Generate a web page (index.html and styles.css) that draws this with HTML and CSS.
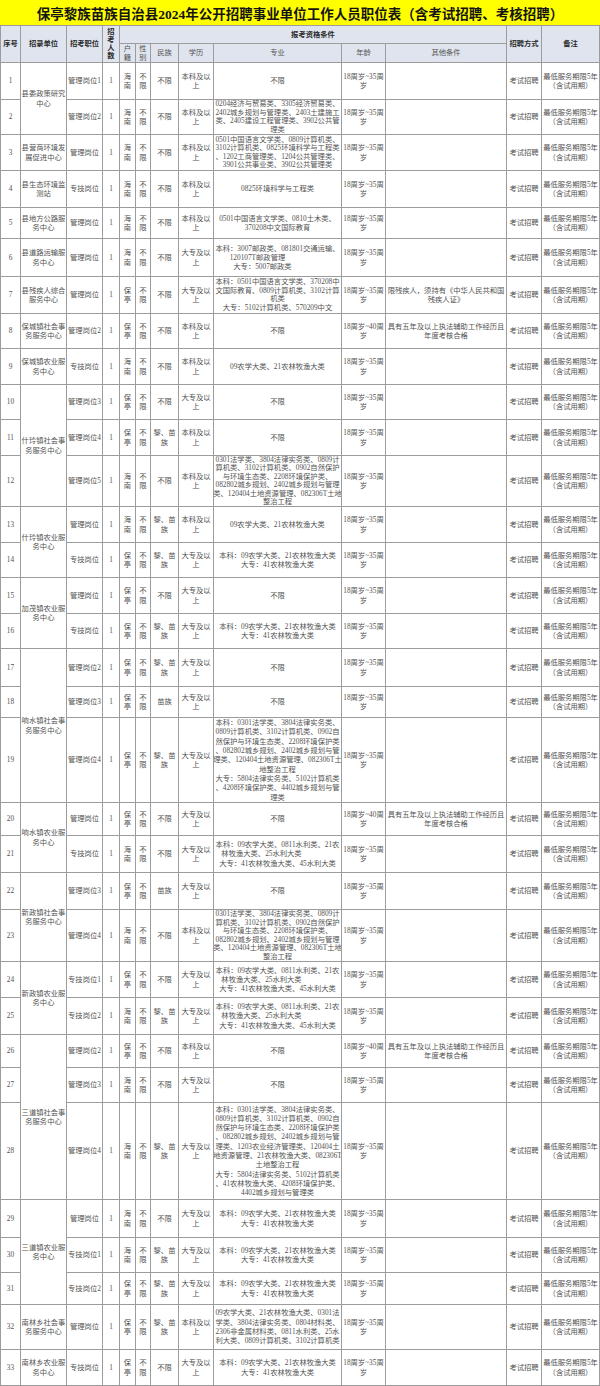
FILE: index.html
```html
<!DOCTYPE html>
<html lang="zh-CN">
<head>
<meta charset="utf-8">
<title>保亭黎族苗族自治县2024年公开招聘事业单位工作人员职位表</title>
<link rel="stylesheet" href="styles.css">
</head>
<body>
<div class="title">保亭黎族苗族自治县2024年公开招聘事业单位工作人员职位表（含考试招聘、考核招聘）</div>
<div class="sheet">
  <div class="c h r2">序号</div>
  <div class="c h r2">招录单位</div>
  <div class="c h r2">招考职位</div>
  <div class="c h r2 tall">招<br>考<br>人<br>数</div>
  <div class="c h c7">报考资格条件</div>
  <div class="c h r2">招聘方式</div>
  <div class="c h r2">备注</div>
  <div class="c hs">户<br>籍</div>
  <div class="c hs">性<br>别</div>
  <div class="c hs">民族</div>
  <div class="c hs">学历</div>
  <div class="c hs">专业</div>
  <div class="c hs">年龄</div>
  <div class="c hs">其他条件</div>

  <!-- 1 -->
  <div class="c">1</div><div class="c r2">县委政策研究<br>中心</div><div class="c">管理岗位1</div><div class="c">1</div><div class="c">海<br>南</div><div class="c">不<br>限</div><div class="c">不限</div><div class="c">本科及以<br>上</div><div class="c">不限</div><div class="c">18周岁~35周<br>岁</div><div class="c"></div><div class="c">考试招聘</div><div class="c">最低服务期限5年<br>（含试用期）</div>
  <!-- 2 -->
  <div class="c">2</div><div class="c">管理岗位2</div><div class="c">1</div><div class="c">海<br>南</div><div class="c">不<br>限</div><div class="c">不限</div><div class="c">本科及以<br>上</div><div class="c dense">0204经济与贸易类、3305经济贸易类、<br>2402城乡规划与管理类、2403土建施工<br>类、2405建设工程管理类、3902公共管<br>理类</div><div class="c">18周岁~35周<br>岁</div><div class="c"></div><div class="c">考试招聘</div><div class="c">最低服务期限5年<br>（含试用期）</div>
  <!-- 3 -->
  <div class="c">3</div><div class="c">县营商环境发<br>展促进中心</div><div class="c">管理岗位</div><div class="c">1</div><div class="c">海<br>南</div><div class="c">不<br>限</div><div class="c">不限</div><div class="c">本科及以<br>上</div><div class="c dense">0501中国语言文学类、0809计算机类、<br>3102计算机类、0825环境科学与工程类<br>、1202工商管理类、1204公共管理类、<br>3901公共事业类、3902公共管理类</div><div class="c">18周岁~35周<br>岁</div><div class="c"></div><div class="c">考试招聘</div><div class="c">最低服务期限5年<br>（含试用期）</div>
  <!-- 4 -->
  <div class="c">4</div><div class="c">县生态环境监<br>测站</div><div class="c">专技岗位</div><div class="c">1</div><div class="c">海<br>南</div><div class="c">不<br>限</div><div class="c">不限</div><div class="c">本科及以<br>上</div><div class="c">0825环境科学与工程类</div><div class="c">18周岁~35周<br>岁</div><div class="c"></div><div class="c">考试招聘</div><div class="c">最低服务期限5年<br>（含试用期）</div>
  <!-- 5 -->
  <div class="c">5</div><div class="c">县地方公路服<br>务中心</div><div class="c">管理岗位</div><div class="c">1</div><div class="c">海<br>南</div><div class="c">不<br>限</div><div class="c">不限</div><div class="c">本科及以<br>上</div><div class="c">0501中国语言文学类、0810土木类、<br>370208中文国际教育</div><div class="c">18周岁~35周<br>岁</div><div class="c"></div><div class="c">考试招聘</div><div class="c">最低服务期限5年<br>（含试用期）</div>
  <!-- 6 -->
  <div class="c">6</div><div class="c">县道路运输服<br>务中心</div><div class="c">管理岗位</div><div class="c">1</div><div class="c">海<br>南</div><div class="c">不<br>限</div><div class="c">不限</div><div class="c">大专及以<br>上</div><div class="c"><div>本科：3007邮政类、081801交通运输、<br><span class="pa">120107T邮政管理</span><br><span class="pb">大专：5007邮政类</span></div></div><div class="c">18周岁~35周<br>岁</div><div class="c"></div><div class="c">考试招聘</div><div class="c">最低服务期限5年<br>（含试用期）</div>
  <!-- 7 -->
  <div class="c">7</div><div class="c">县残疾人综合<br>服务中心</div><div class="c">管理岗位</div><div class="c">1</div><div class="c">保<br>亭</div><div class="c">不<br>限</div><div class="c">不限</div><div class="c">大专及以<br>上</div><div class="c dense">本科：0501中国语言文学类、370208中<br>文国际教育、0809计算机类、3102计算<br>机类<br>大专：5102计算机类、570209中文</div><div class="c">18周岁~35周<br>岁</div><div class="c">限残疾人，须持有《中华人民共和国<br>残疾人证》</div><div class="c">考试招聘</div><div class="c">最低服务期限5年<br>（含试用期）</div>
  <!-- 8 -->
  <div class="c">8</div><div class="c">保城镇社会事<br>务服务中心</div><div class="c">管理岗位2</div><div class="c">1</div><div class="c">保<br>亭</div><div class="c">不<br>限</div><div class="c">不限</div><div class="c">本科及以<br>上</div><div class="c">不限</div><div class="c">18周岁~40周<br>岁</div><div class="c">具有五年及以上执法辅助工作经历且<br>年度考核合格</div><div class="c">考试招聘</div><div class="c">最低服务期限5年<br>（含试用期）</div>
  <!-- 9 -->
  <div class="c">9</div><div class="c">保城镇农业服<br>务中心</div><div class="c">专技岗位</div><div class="c">1</div><div class="c">海<br>南</div><div class="c">不<br>限</div><div class="c">不限</div><div class="c">本科及以<br>上</div><div class="c">09农学大类、21农林牧渔大类</div><div class="c">18周岁~35周<br>岁</div><div class="c"></div><div class="c">考试招聘</div><div class="c">最低服务期限5年<br>（含试用期）</div>
  <!-- 10 -->
  <div class="c">10</div><div class="c r3">什玲镇社会事<br>务服务中心</div><div class="c">管理岗位3</div><div class="c">1</div><div class="c">保<br>亭</div><div class="c">不<br>限</div><div class="c">不限</div><div class="c">大专及以<br>上</div><div class="c">不限</div><div class="c">18周岁~35周<br>岁</div><div class="c"></div><div class="c">考试招聘</div><div class="c">最低服务期限5年<br>（含试用期）</div>
  <!-- 11 -->
  <div class="c">11</div><div class="c">管理岗位4</div><div class="c">1</div><div class="c">保<br>亭</div><div class="c">不<br>限</div><div class="c">黎、苗<br>族</div><div class="c">本科及以<br>上</div><div class="c">不限</div><div class="c">18周岁~35周<br>岁</div><div class="c"></div><div class="c">考试招聘</div><div class="c">最低服务期限5年<br>（含试用期）</div>
  <!-- 12 -->
  <div class="c">12</div><div class="c">管理岗位5</div><div class="c">1</div><div class="c">海<br>南</div><div class="c">不<br>限</div><div class="c">不限</div><div class="c">本科及以<br>上</div><div class="c dense">0301法学类、3804法律实务类、0809计<br>算机类、3102计算机类、0902自然保护<br>与环境生态类、2208环境保护类、<br>082802城乡规划、2402城乡规划与管理<br>类、120404土地资源管理、082306T土地<br>整治工程</div><div class="c">18周岁~35周<br>岁</div><div class="c"></div><div class="c">考试招聘</div><div class="c">最低服务期限5年<br>（含试用期）</div>
  <!-- 13 -->
  <div class="c">13</div><div class="c r2">什玲镇农业服<br>务中心</div><div class="c">管理岗位</div><div class="c">1</div><div class="c">海<br>南</div><div class="c">不<br>限</div><div class="c">黎、苗<br>族</div><div class="c">本科及以<br>上</div><div class="c">09农学大类、21农林牧渔大类</div><div class="c">18周岁~35周<br>岁</div><div class="c"></div><div class="c">考试招聘</div><div class="c">最低服务期限5年<br>（含试用期）</div>
  <!-- 14 -->
  <div class="c">14</div><div class="c">专技岗位</div><div class="c">1</div><div class="c">保<br>亭</div><div class="c">不<br>限</div><div class="c">黎、苗<br>族</div><div class="c">大专及以<br>上</div><div class="c">本科：09农学大类、21农林牧渔大类<br>大专：41农林牧渔大类</div><div class="c">18周岁~35周<br>岁</div><div class="c"></div><div class="c">考试招聘</div><div class="c">最低服务期限5年<br>（含试用期）</div>
  <!-- 15 -->
  <div class="c">15</div><div class="c r2">加茂镇农业服<br>务中心</div><div class="c">管理岗位</div><div class="c">1</div><div class="c">保<br>亭</div><div class="c">不<br>限</div><div class="c">不限</div><div class="c">大专及以<br>上</div><div class="c">不限</div><div class="c">18周岁~35周<br>岁</div><div class="c"></div><div class="c">考试招聘</div><div class="c">最低服务期限5年<br>（含试用期）</div>
  <!-- 16 -->
  <div class="c">16</div><div class="c">专技岗位</div><div class="c">1</div><div class="c">保<br>亭</div><div class="c">不<br>限</div><div class="c">黎、苗<br>族</div><div class="c">大专及以<br>上</div><div class="c">本科：09农学大类、21农林牧渔大类<br>大专：41农林牧渔大类</div><div class="c">18周岁~35周<br>岁</div><div class="c"></div><div class="c">考试招聘</div><div class="c">最低服务期限5年<br>（含试用期）</div>
  <!-- 17 -->
  <div class="c">17</div><div class="c r3">响水镇社会事<br>务服务中心</div><div class="c">管理岗位2</div><div class="c">1</div><div class="c">保<br>亭</div><div class="c">不<br>限</div><div class="c">黎、苗<br>族</div><div class="c">大专及以<br>上</div><div class="c">不限</div><div class="c">18周岁~35周<br>岁</div><div class="c"></div><div class="c">考试招聘</div><div class="c">最低服务期限5年<br>（含试用期）</div>
  <!-- 18 -->
  <div class="c">18</div><div class="c">管理岗位3</div><div class="c">1</div><div class="c">保<br>亭</div><div class="c">不<br>限</div><div class="c">苗族</div><div class="c">大专及以<br>上</div><div class="c">不限</div><div class="c">18周岁~35周<br>岁</div><div class="c"></div><div class="c">考试招聘</div><div class="c">最低服务期限5年<br>（含试用期）</div>
  <!-- 19 -->
  <div class="c">19</div><div class="c">管理岗位4</div><div class="c">1</div><div class="c">保<br>亭</div><div class="c">不<br>限</div><div class="c">黎、苗<br>族</div><div class="c">大专及以<br>上</div><div class="c">本科：0301法学类、3804法律实务类、<br>0809计算机类、3102计算机类、0902自<br>然保护与环境生态类、2208环境保护类<br>、082802城乡规划、2402城乡规划与管<br>理类、120404土地资源管理、082306T土<br>地整治工程<br>大专：5804法律实务类、5102计算机类<br>、4208环境保护类、4402城乡规划与管<br>理类</div><div class="c">18周岁~35周<br>岁</div><div class="c"></div><div class="c">考试招聘</div><div class="c">最低服务期限5年<br>（含试用期）</div>
  <!-- 20 -->
  <div class="c">20</div><div class="c r2">响水镇农业服<br>务中心</div><div class="c">管理岗位</div><div class="c">1</div><div class="c">保<br>亭</div><div class="c">不<br>限</div><div class="c">不限</div><div class="c">大专及以<br>上</div><div class="c">不限</div><div class="c">18周岁~40周<br>岁</div><div class="c">具有五年及以上执法辅助工作经历且<br>年度考核合格</div><div class="c">考试招聘</div><div class="c">最低服务期限5年<br>（含试用期）</div>
  <!-- 21 -->
  <div class="c">21</div><div class="c">专技岗位</div><div class="c">1</div><div class="c">海<br>南</div><div class="c">不<br>限</div><div class="c">不限</div><div class="c">大专及以<br>上</div><div class="c"><div>本科：09农学大类、0811水利类、21农<br><span class="pc">林牧渔大类、25水利大类</span><br>大专：41农林牧渔大类、45水利大类</div></div><div class="c">18周岁~35周<br>岁</div><div class="c"></div><div class="c">考试招聘</div><div class="c">最低服务期限5年<br>（含试用期）</div>
  <!-- 22 -->
  <div class="c">22</div><div class="c r2">新政镇社会事<br>务服务中心</div><div class="c">管理岗位3</div><div class="c">1</div><div class="c">保<br>亭</div><div class="c">不<br>限</div><div class="c">苗族</div><div class="c">大专及以<br>上</div><div class="c">不限</div><div class="c">18周岁~35周<br>岁</div><div class="c"></div><div class="c">考试招聘</div><div class="c">最低服务期限5年<br>（含试用期）</div>
  <!-- 23 -->
  <div class="c">23</div><div class="c">管理岗位4</div><div class="c">1</div><div class="c">海<br>南</div><div class="c">不<br>限</div><div class="c">不限</div><div class="c">本科及以<br>上</div><div class="c dense">0301法学类、3804法律实务类、0809计<br>算机类、3102计算机类、0902自然保护<br>与环境生态类、2208环境保护类、<br>082802城乡规划、2402城乡规划与管理<br>类、120404土地资源管理、082306T土地<br>整治工程</div><div class="c">18周岁~35周<br>岁</div><div class="c"></div><div class="c">考试招聘</div><div class="c">最低服务期限5年<br>（含试用期）</div>
  <!-- 24 -->
  <div class="c">24</div><div class="c r2">新政镇农业服<br>务中心</div><div class="c">专技岗位1</div><div class="c">1</div><div class="c">保<br>亭</div><div class="c">不<br>限</div><div class="c">不限</div><div class="c">大专及以<br>上</div><div class="c"><div>本科：09农学大类、0811水利类、21农<br><span class="pc">林牧渔大类、25水利大类</span><br>大专：41农林牧渔大类、45水利大类</div></div><div class="c">18周岁~35周<br>岁</div><div class="c"></div><div class="c">考试招聘</div><div class="c">最低服务期限5年<br>（含试用期）</div>
  <!-- 25 -->
  <div class="c">25</div><div class="c">专技岗位2</div><div class="c">1</div><div class="c">海<br>南</div><div class="c">不<br>限</div><div class="c">黎、苗<br>族</div><div class="c">大专及以<br>上</div><div class="c"><div>本科：09农学大类、0811水利类、21农<br><span class="pc">林牧渔大类、25水利大类</span><br>大专：41农林牧渔大类、45水利大类</div></div><div class="c">18周岁~35周<br>岁</div><div class="c"></div><div class="c">考试招聘</div><div class="c">最低服务期限5年<br>（含试用期）</div>
  <!-- 26 -->
  <div class="c">26</div><div class="c r3">三道镇社会事<br>务服务中心</div><div class="c">管理岗位2</div><div class="c">1</div><div class="c">保<br>亭</div><div class="c">不<br>限</div><div class="c">不限</div><div class="c">本科及以<br>上</div><div class="c">不限</div><div class="c">18周岁~40周<br>岁</div><div class="c">具有五年及以上执法辅助工作经历且<br>年度考核合格</div><div class="c">考试招聘</div><div class="c">最低服务期限5年<br>（含试用期）</div>
  <!-- 27 -->
  <div class="c">27</div><div class="c">管理岗位3</div><div class="c">1</div><div class="c">海<br>南</div><div class="c">不<br>限</div><div class="c">不限</div><div class="c">大专及以<br>上</div><div class="c">不限</div><div class="c">18周岁~35周<br>岁</div><div class="c"></div><div class="c">考试招聘</div><div class="c">最低服务期限5年<br>（含试用期）</div>
  <!-- 28 -->
  <div class="c">28</div><div class="c">管理岗位4</div><div class="c">1</div><div class="c">海<br>南</div><div class="c">不<br>限</div><div class="c">黎、苗<br>族</div><div class="c">大专及以<br>上</div><div class="c">本科：0301法学类、3804法律实务类、<br>0809计算机类、3102计算机类、0902自<br>然保护与环境生态类、2208环境保护类<br>、082802城乡规划、2402城乡规划与管<br>理类、1203农业经济管理类、120404土<br>地资源管理、21农林牧渔大类、082306T<br>土地整治工程<br>大专：5804法律实务类、5102计算机类<br>、41农林牧渔大类、4208环境保护类、<br>4402城乡规划与管理类</div><div class="c">18周岁~35周<br>岁</div><div class="c"></div><div class="c">考试招聘</div><div class="c">最低服务期限5年<br>（含试用期）</div>
  <!-- 29 -->
  <div class="c">29</div><div class="c r3">三道镇农业服<br>务中心</div><div class="c">管理岗位</div><div class="c">1</div><div class="c">海<br>南</div><div class="c">不<br>限</div><div class="c">不限</div><div class="c">大专及以<br>上</div><div class="c">本科：09农学大类、21农林牧渔大类<br>大专：41农林牧渔大类</div><div class="c">18周岁~35周<br>岁</div><div class="c"></div><div class="c">考试招聘</div><div class="c">最低服务期限5年<br>（含试用期）</div>
  <!-- 30 -->
  <div class="c">30</div><div class="c">专技岗位1</div><div class="c">1</div><div class="c">海<br>南</div><div class="c">不<br>限</div><div class="c">黎、苗<br>族</div><div class="c">大专及以<br>上</div><div class="c">本科：09农学大类、21农林牧渔大类<br>大专：41农林牧渔大类</div><div class="c">18周岁~35周<br>岁</div><div class="c"></div><div class="c">考试招聘</div><div class="c">最低服务期限5年<br>（含试用期）</div>
  <!-- 31 -->
  <div class="c">31</div><div class="c">专技岗位2</div><div class="c">1</div><div class="c">保<br>亭</div><div class="c">不<br>限</div><div class="c">黎、苗<br>族</div><div class="c">大专及以<br>上</div><div class="c">本科：09农学大类、21农林牧渔大类<br>大专：41农林牧渔大类</div><div class="c">18周岁~35周<br>岁</div><div class="c"></div><div class="c">考试招聘</div><div class="c">最低服务期限5年<br>（含试用期）</div>
  <!-- 32 -->
  <div class="c">32</div><div class="c">南林乡社会事<br>务服务中心</div><div class="c">管理岗位</div><div class="c">1</div><div class="c">保<br>亭</div><div class="c">不<br>限</div><div class="c">黎、苗<br>族</div><div class="c">本科及以<br>上</div><div class="c">09农学大类、21农林牧渔大类、0301法<br>学类、3804法律实务类、0804材料类、<br>2306非金属材料类、0811水利类、25水<br>利大类、0809计算机类、3102计算机类</div><div class="c">18周岁~35周<br>岁</div><div class="c"></div><div class="c">考试招聘</div><div class="c">最低服务期限5年<br>（含试用期）</div>
  <!-- 33 -->
  <div class="c">33</div><div class="c">南林乡农业服<br>务中心</div><div class="c">专技岗位</div><div class="c">1</div><div class="c">保<br>亭</div><div class="c">不<br>限</div><div class="c">不限</div><div class="c">大专及以<br>上</div><div class="c">本科：09农学大类、21农林牧渔大类<br>大专：41农林牧渔大类</div><div class="c">18周岁~35周<br>岁</div><div class="c"></div><div class="c">考试招聘</div><div class="c">最低服务期限5年<br>（含试用期）</div>
</div>
</body>
</html>
```
FILE: styles.css
```css
html, body {
  margin: 0;
  padding: 0;
  background: #ffffff;
}

body {
  width: 600px;
  font-family: "Liberation Serif", "Noto Sans CJK SC", serif;
}

.title {
  height: 25px;
  background: #ffff00;
  display: flex;
  align-items: center;
  justify-content: center;
  font-size: 13.5px;
  font-weight: 700;
  color: #141414;
  white-space: nowrap;
  overflow: hidden;
}

.sheet {
  display: grid;
  grid-template-columns: 19px 45px 35px 16px 15px 14px 27px 34px 127px 43px 120px 34px 57px;
  grid-template-rows:
    17px 18px
    36px 34px 35px 36px 30px 37px 36px 34px 35px 34px
    35px 50px 35px 34px 35px 34px 37px 30px 84px 32px
    36px 36px 51px 35px 36px 32px 34px 96px 37px 34px
    31px 44px 35px;
  gap: 1px;
  padding: 1px;
  background: #9c9c9c;
}

.c {
  background: #ffffff;
  display: flex;
  align-items: center;
  justify-content: center;
  text-align: center;
  overflow: hidden;
  white-space: nowrap;
  font-size: 7.3px;
  line-height: 9.3px;
  color: #525252;
  padding: 0 1px;
}

.dense { line-height: 8.5px; }

.h {
  background: #dfe4ee;
  font-weight: 700;
  color: #2a2a2a;
}

.hs {
  background: #dfe4ee;
  color: #555555;
}

.r2 { grid-row: span 2; }
.r3 { grid-row: span 3; }
.c7 { grid-column: span 7; }

.tall { line-height: 8px; }

.pa { padding-right: 40px; }
.pb { padding-right: 30px; }
.pc { padding-right: 32px; }
```
